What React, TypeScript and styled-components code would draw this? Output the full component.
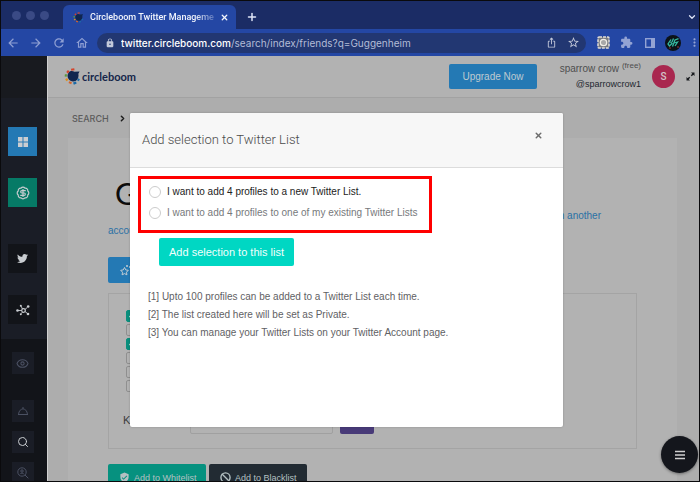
import React from "react";
import styled, { createGlobalStyle, css } from "styled-components";
import {
  MdArrowBack,
  MdArrowForward,
  MdRefresh,
  MdOutlineHome,
  MdLock,
  MdIosShare,
  MdStarOutline,
  MdExtension,
  MdMoreVert,
  MdVerifiedUser,
} from "react-icons/md";
import { FaTwitter, FaCheck } from "react-icons/fa";
import { BadgeDollarSign, Ban, ChevronDown, ChevronRight, Eye, Plus, Search, X } from "lucide-react";

const sans = `"Liberation Sans", Arial, sans-serif`;
const ui = `Roboto, "Liberation Sans", sans-serif`;

const GlobalStyle = createGlobalStyle`
  *, *::before, *::after { box-sizing: border-box; }
  body { margin: 0; background: #000; font-family: ${sans}; }
  button, input { font-family: inherit; margin: 0; }
  button { border: 0; padding: 0; cursor: pointer; background: none; color: inherit; }
  h1, h2, p, ul { margin: 0; padding: 0; }
  svg { display: block; flex: none; }
`;

const Window = styled.div`
  position: relative;
  display: flex;
  flex-direction: column;
  height: 100vh;
  overflow: hidden;
  border: 1px solid #0a0a0c;
`;

/* Browser chrome */

const TabStrip = styled.div`
  display: flex;
  align-items: center;
  flex: none;
  height: 28px;
  padding: 0 2px 0 11px;
  background: #1b2c65;
  color: #dfe5f7;
`;

const Lights = styled.div`
  display: flex;
  gap: 5px;
  width: 51px;
`;

const Light = styled.span`
  width: 9px;
  height: 9px;
  border-radius: 50%;
  background: #3a4a85;
`;

const Tab = styled.div`
  display: flex;
  align-items: center;
  align-self: flex-end;
  width: 173px;
  height: 24px;
  padding: 0 7px 0 10px;
  gap: 6px;
  border-radius: 6px 6px 0 0;
  background: #2447a4;
  font: 500 9px/14px ${ui};
  color: #f2f5fd;
`;

const TabTitle = styled.span`
  flex: 1;
  white-space: nowrap;
  mask-image: linear-gradient(to right, #000 84%, rgba(0, 0, 0, 0.25));
`;

const ChromeButton = styled.button<{ $tone?: string }>`
  display: flex;
  align-items: center;
  justify-content: center;
  flex: none;
  color: ${(p) => p.$tone ?? "#b8c4e8"};
`;

const NewTab = styled(ChromeButton)`
  margin: 4px auto 0 10px;
`;

const TabList = styled(ChromeButton)`
  margin-top: 4px;
`;

const Toolbar = styled.div`
  display: flex;
  align-items: center;
  flex: none;
  height: 27px;
  padding-left: 5px;
  background: #2447a4;
`;

const NavButtons = styled.div`
  display: flex;
  gap: 9px;
  width: 91px;
`;

const Address = styled.div`
  display: flex;
  align-items: center;
  flex: 1;
  height: 20px;
  padding: 0 6px 0 8px;
  gap: 10px;
  border-radius: 10px;
  background: #223772;
  color: #c3c9da;
`;

const Location = styled.div`
  display: flex;
  align-items: center;
  flex: 1;
  gap: 6px;
`;

const Url = styled.span`
  flex: 1;
  overflow: hidden;
  white-space: nowrap;
  font: 400 10px/16px Inter, sans-serif;
  color: #b3bcd6;
`;

const Host = styled.span`
  font-weight: 500;
  color: #ffffff;
`;

const Extensions = styled.div`
  display: grid;
  grid-template-columns: repeat(4, 13px) 10px;
  align-items: center;
  justify-items: center;
  gap: 10px;
  padding-left: 11px;
`;

/* Application shell */

const Shell = styled.div`
  display: flex;
  flex: 1;
  min-height: 0;
  overflow: hidden;
`;

const Sidebar = styled.nav`
  display: flex;
  flex-direction: column;
  flex: none;
  width: 47px;
  border-right: 1px solid #d0d0d0;
  background: #1a1d26;
`;

const SidebarCap = styled.div`
  flex: none;
  height: 42px;
  background: #181a1f;
`;

const PrimaryLinks = styled.div`
  display: flex;
  flex-direction: column;
  align-items: center;
  flex: none;
  gap: 22px;
  padding: 29px 3px 15px 0;
`;

const SecondaryLinks = styled.div`
  display: flex;
  flex-direction: column;
  align-items: center;
  flex: 1;
  gap: 9px;
  padding: 13px 3px 0 0;
  background: #121419;
`;

const Tile = styled.a<{ $bg: string; $small?: boolean; $spaced?: number; $tone?: string }>`
  display: flex;
  align-items: center;
  justify-content: center;
  flex: none;
  width: ${(p) => (p.$small ? 22 : 29)}px;
  height: ${(p) => (p.$small ? 22 : 29)}px;
  margin-top: ${(p) => p.$spaced ?? 0}px;
  background: ${(p) => p.$bg};
  color: ${(p) => p.$tone ?? "#c9cdd1"};
`;

const Main = styled.div`
  flex: 1;
  min-width: 0;
  background: #adadad;
`;

const Header = styled.header`
  display: flex;
  align-items: center;
  height: 42px;
  padding: 0 4px 0 16px;
  border-bottom: 1px solid #a2a2a2;
  background: #b2b2b2;
`;

const Brand = styled.a`
  display: flex;
  align-items: center;
  gap: 1px;
  margin-right: auto;
  font: 700 11px/16px Lato, sans-serif;
  color: #15264a;
  text-decoration: none;
`;

const Upgrade = styled.button`
  height: 25px;
  width: 88px;
  border-radius: 2px;
  background: #2479b4;
  color: #bfc9d0;
  font-size: 10px;
`;

const Account = styled.div`
  width: 104px;
  margin-right: 11px;
  text-align: right;
  font-size: 10px;
  line-height: 14px;
  color: #4e4e4e;
`;

const Plan = styled.sup`
  font-size: 8px;
  line-height: 8px;
`;

const Handle = styled.div`
  font-size: 9px;
  line-height: 14px;
  color: #222730;
`;

const Avatar = styled.div`
  width: 23px;
  height: 23px;
  margin-right: 11px;
  border-radius: 50%;
  background: #a9274f;
  color: #d3c4c9;
  font: 500 10px/23px ${ui};
  text-align: center;
`;

const Crumbs = styled.div`
  display: flex;
  align-items: center;
  gap: 9px;
  height: 40px;
  padding: 1px 0 0 24px;
  font: 500 9px/14px Inter, sans-serif;
  color: #5c5c5c;
`;

const Card = styled.section`
  margin: 0 22px 0 20px;
  padding: 41px 40px 0;
  height: 400px;
  background: #b2b2b2;
`;

const Heading = styled.h1`
  padding-left: 7px;
  font: 400 30px/29px Lato, sans-serif;
  color: #0c0c0c;
`;

const Hint = styled.a`
  display: block;
  padding-right: 36px;
  font-size: 10px;
  line-height: 15px;
  color: #2a71a5;
  text-decoration: none;
`;

const HintEnd = styled.span`
  display: block;
  text-align: right;
`;

const Favourite = styled.button`
  display: flex;
  align-items: center;
  width: 90px;
  height: 26px;
  margin-top: 19px;
  padding-left: 11px;
  border-radius: 2px;
  background: #2479b4;
  color: #c3ccd3;
`;

const Filters = styled.div`
  margin-top: 10px;
  padding: 16px 17px 14px;
  border: 1px solid #a4a4a4;
`;

const FilterList = styled.div`
  display: flex;
  flex-direction: column;
  gap: 2px;
`;

const tick = css`
  border-color: #0a8f7d;
  background: #0a8f7d;
`;

const FilterBox = styled.input`
  appearance: none;
  display: block;
  width: 12px;
  height: 12px;
  border: 1px solid #8f8f8f;
  border-radius: 2px;
  &:checked {
    ${tick}
  }
`;

const FilterLabel = styled.label`
  display: grid;
  width: 12px;
  color: #c6dad6;
  > * {
    grid-area: 1 / 1;
    place-self: center;
  }
`;

const KeywordRow = styled.div`
  display: flex;
  align-items: center;
  margin: 13px 0 0 -3px;
  font-size: 11px;
  color: #3c3c3c;
`;

const KeywordLabel = styled.label`
  width: 67px;
`;

const KeywordInput = styled.input`
  width: 143px;
  height: 28px;
  border: 1px solid #a0a0a0;
  border-radius: 2px;
  background: #b2b2b2;
`;

const KeywordButton = styled.button`
  width: 34px;
  height: 29px;
  margin-left: 7px;
  border-radius: 2px;
  background: #483a78;
`;

const Actions = styled.div`
  display: flex;
  gap: 3px;
  margin-top: 15px;
`;

const Action = styled.button<{ $bg: string }>`
  display: flex;
  align-items: center;
  gap: 4px;
  width: 98px;
  height: 27px;
  padding-left: 11px;
  border-radius: 2px;
  background: ${(p) => p.$bg};
  color: #b4c0c2;
  font-size: 9px;
  white-space: nowrap;
`;

/* Dialog */

const Overlay = styled.div`
  position: absolute;
  inset: 0;
  padding: 112px 136px 0 129px;
`;

const Dialog = styled.div`
  overflow: hidden;
  border-radius: 2px;
  background: #ffffff;
  color: #5f6164;
  box-shadow: 0 0 2px rgba(0, 0, 0, 0.25);
`;

const DialogHead = styled.div`
  display: flex;
  justify-content: space-between;
  height: 55px;
  padding: 18px 20px 0 12px;
  border-bottom: 1px solid #dcdcdc;
  background: #f7f7f7;
`;

const DialogTitle = styled.h2`
  font: 300 13px/18px ${ui};
  color: #4a4a4a;
`;

const Close = styled.button`
  height: 8px;
  color: #6c6c6c;
`;

const DialogBody = styled.div`
  padding: 8px 8px 85px;
`;

const Choices = styled.div`
  display: flex;
  flex-direction: column;
  gap: 7px;
  max-width: 294px;
  height: 57px;
  padding: 6px 8px;
  border: 3px solid #ff0000;
`;

const Choice = styled.label<{ $strong?: boolean }>`
  display: flex;
  align-items: center;
  gap: 6px;
  font-size: 10px;
  line-height: 14px;
  white-space: nowrap;
  color: ${(p) => (p.$strong ? "#222222" : "#77797c")};
`;

const Radio = styled.input`
  appearance: none;
  width: 12px;
  height: 12px;
  border: 1px solid #cccccc;
  border-radius: 50%;
  background: #ffffff;
  &:checked {
    border: 4px solid #00d6c1;
  }
`;

const Submit = styled.button`
  display: block;
  width: 135px;
  height: 28px;
  margin: 5px 0 0 21px;
  border-radius: 2px;
  background: #00d7c3;
  color: #f2fffd;
  font-size: 11px;
`;

const Notes = styled.div`
  margin: 22px 0 0 10px;
  font-size: 10px;
  line-height: 18px;
`;

const MenuFab = styled.button`
  position: absolute;
  right: 1px;
  bottom: 8px;
  display: flex;
  align-items: center;
  justify-content: center;
  width: 37px;
  height: 37px;
  border-radius: 50%;
  background: #14161c;
  color: #cfcfcf;
  box-shadow: 0 1px 3px rgba(0, 0, 0, 0.4);
`;

function BrandMark({ size }: { size: number }) {
  return (
    <svg width={size} height={size} viewBox="0 0 18 18" fill="none" aria-hidden="true">
      <path d="M5 4.800C7 2.500 9.500 3.300 11 4l5.500-.3L15.200 6c.6 3-.2 6-2.500 7.400-2.800 1.700-6.400.7-7.900-1.700C3.200 9.500 3.500 6.500 5 4.800z" fill="#10264f" />
      <path d="M7.500 1.900 11 1.400" stroke="#d4442b" strokeWidth="2.200" />
      <path d="M3.200 5 5 2.900" stroke="#d4442b" strokeWidth="2.200" />
      <path d="M1.800 9.200 2 6.600" stroke="#5c9a3b" strokeWidth="2.200" />
      <path d="M3.600 13.400 2.300 11.200" stroke="#e08e1d" strokeWidth="2.400" />
      <path d="M8 16.200 5.200 15" stroke="#d4632b" strokeWidth="2.200" />
      <path d="M13 15.300 10 16.500" stroke="#1c6ba8" strokeWidth="2.400" />
      <path d="M15.900 11.300 14.700 13.500" stroke="#1c6ba8" strokeWidth="2.200" />
    </svg>
  );
}

function GridGlyph() {
  return (
    <svg width="10" height="10" viewBox="0 0 10 10" fill="currentColor" aria-hidden="true">
      <path d="M0 0h4.500v4.500H0zM5.500 0H10v4.500H5.500zM0 5.500h4.500V10H0zM5.500 5.500H10V10H5.500z" />
    </svg>
  );
}

function NetworkGlyph() {
  return (
    <svg width="14" height="12" viewBox="0 0 14 12" fill="none" stroke="currentColor" aria-hidden="true">
      <circle cx="7.500" cy="6.500" r="1.800" strokeWidth="1.200" />
      <path d="M5.500 6.500H2M6.500 5 5 2M9 5.500l2.500-2.300M9 7.500l2.500 2M6.500 8l-1 1.500" strokeWidth=".9" />
      <g fill="currentColor" stroke="none">
        <circle cx="1.500" cy="6.500" r="1.300" />
        <circle cx="4.800" cy="1.700" r="1" />
        <circle cx="12.200" cy="2.500" r="1.300" />
        <circle cx="12" cy="10" r="1.300" />
        <circle cx="4.800" cy="10.200" r="1" />
      </g>
    </svg>
  );
}

function BellGlyph() {
  return (
    <svg width="12" height="10" viewBox="0 0 12 10" fill="none" stroke="currentColor" aria-hidden="true">
      <path d="M1 8.500h10M1.500 8.500C2 4.500 4 3 6 3s4 1.500 4.500 5.500M6 3V1" />
    </svg>
  );
}

function ZoomUserGlyph() {
  return (
    <svg width="12" height="12" viewBox="0 0 12 12" fill="none" stroke="currentColor" aria-hidden="true">
      <circle cx="5" cy="5" r="4.200" />
      <path d="m8 8 3.300 3.300M3.200 7c.5-1.200 3-1.200 3.600 0" />
      <circle cx="5" cy="4" r="1.200" />
    </svg>
  );
}

function StarsGlyph() {
  return (
    <svg width="14" height="12" viewBox="0 0 14 12" fill="none" stroke="currentColor" aria-hidden="true">
      <path d="m5.500 3.500 1.200 2.400 2.600.4-1.800 1.900.4 2.600-2.400-1.200-2.400 1.200.4-2.600-1.800-1.900 2.600-.4z" />
      <path d="M8 1v2M7 2h2M11 2v2M10 3h2" />
    </svg>
  );
}

function SnipGlyph() {
  return (
    <svg width="13" height="13" viewBox="0 0 13 13" fill="none" aria-hidden="true">
      <rect x="1" y="1" width="11" height="11" rx="1" fill="#777a80" stroke="#e4e0d8" strokeWidth="1.500" strokeDasharray="3 1" />
      <circle cx="6.500" cy="6.500" r="3.200" fill="#a8a8a8" stroke="#f0ede6" strokeWidth="1.300" />
    </svg>
  );
}

function PanelGlyph() {
  return (
    <svg width="10" height="10" viewBox="0 0 10 10" aria-hidden="true">
      <rect x=".7" y=".7" width="8.600" height="8.600" fill="none" stroke="#93a3d4" strokeWidth="1.400" />
      <rect x="6" y="1" width="3.500" height="8" fill="#93a3d4" />
    </svg>
  );
}

function ProfileGlyph() {
  return (
    <svg width="16" height="16" viewBox="0 0 16 16" fill="none" aria-hidden="true">
      <circle cx="8" cy="8" r="8" fill="#0b1218" />
      <path d="M6 4.500 3 9l1.500 2L7 8.500 5.500 7M7.500 11.500 10 5l3.500-1.300M9 8l3.500-1L10 11M8.500 3.500 7 7" stroke="#35b9a0" strokeWidth="1.300" />
      <circle cx="5" cy="13" r=".7" fill="#d33f3f" />
      <circle cx="13" cy="12" r=".7" fill="#d33f3f" />
    </svg>
  );
}

function ExpandGlyph() {
  return (
    <svg width="9" height="9" viewBox="0 0 9 9" fill="currentColor" stroke="currentColor" aria-hidden="true">
      <path d="M5 .5h3.500V4zM.5 5v3.500H4z" stroke="none" />
      <path d="M7.500 1.500 5.300 3.700M1.500 7.500l2.200-2.200" strokeWidth="1.400" />
    </svg>
  );
}

function MenuGlyph() {
  return (
    <svg width="10" height="10" viewBox="0 0 10 10" stroke="currentColor" strokeWidth="1.400" aria-hidden="true">
      <path d="M0 1.500h10M0 5h10M0 8.500h10" />
    </svg>
  );
}

const filters = [true, false, true, false, false, false];

const notes = [
  "[1] Upto 100 profiles can be added to a Twitter List each time.",
  "[2] The list created here will be set as Private.",
  "[3] You can manage your Twitter Lists on your Twitter Account page.",
];

function Browser() {
  return (
    <>
      <TabStrip>
        <Lights>
          <Light />
          <Light />
          <Light />
        </Lights>
        <Tab>
          <BrandMark size={11} />
          <TabTitle>Circleboom Twitter Manageme</TabTitle>
          <ChromeButton $tone="#f2f5fd" aria-label="Close tab">
            <X size={9} strokeWidth={3.5} />
          </ChromeButton>
        </Tab>
        <NewTab $tone="#dfe5f7" aria-label="New tab">
          <Plus size={12} strokeWidth={3} />
        </NewTab>
        <TabList $tone="#dfe5f7" aria-label="Tab list">
          <ChevronDown size={10} strokeWidth={3} />
        </TabList>
      </TabStrip>
      <Toolbar>
        <NavButtons>
          <ChromeButton $tone="#8e9fd3" aria-label="Back"><MdArrowBack size={14} /></ChromeButton>
          <ChromeButton $tone="#8e9fd3" aria-label="Forward"><MdArrowForward size={14} /></ChromeButton>
          <ChromeButton $tone="#8e9fd3" aria-label="Reload"><MdRefresh size={14} /></ChromeButton>
          <ChromeButton $tone="#8e9fd3" aria-label="Home"><MdOutlineHome size={14} /></ChromeButton>
        </NavButtons>
        <Address>
          <Location>
            <MdLock size={10} />
            <Url>
              <Host>twitter.circleboom.com</Host>/search/index/friends?q=Guggenheim
            </Url>
          </Location>
          <ChromeButton $tone="#c3c9da" aria-label="Share"><MdIosShare size={11} /></ChromeButton>
          <ChromeButton $tone="#c3c9da" aria-label="Bookmark"><MdStarOutline size={13} /></ChromeButton>
        </Address>
        <Extensions>
          <SnipGlyph />
          <ChromeButton $tone="#93a3d4" aria-label="Extensions"><MdExtension size={13} /></ChromeButton>
          <PanelGlyph />
          <ProfileGlyph />
          <ChromeButton $tone="#93a3d4" aria-label="Browser menu"><MdMoreVert size={13} /></ChromeButton>
        </Extensions>
      </Toolbar>
    </>
  );
}

function SideNav() {
  return (
    <Sidebar>
      <SidebarCap />
      <PrimaryLinks>
        <Tile href="#dashboard" aria-label="Dashboard" $bg="#2479b4"><GridGlyph /></Tile>
        <Tile href="#pricing" aria-label="Pricing" $bg="#067a66"><BadgeDollarSign size={14} /></Tile>
        <Tile href="#twitter" aria-label="Twitter" $bg="#121419" $spaced={15}><FaTwitter size={11} /></Tile>
        <Tile href="#network" aria-label="Network" $bg="#121419"><NetworkGlyph /></Tile>
      </PrimaryLinks>
      <SecondaryLinks>
        <Tile href="#watch" aria-label="Watch" $bg="#1a1d26" $tone="#4b5163" $small><Eye size={13} /></Tile>
        <Tile href="#alerts" aria-label="Alerts" $bg="#1a1d26" $tone="#4b5163" $small $spaced={17}><BellGlyph /></Tile>
        <Tile href="#search" aria-label="Search" $bg="#1a1d26" $small><Search size={12} /></Tile>
        <Tile href="#people" aria-label="People search" $bg="#1a1d26" $tone="#4b5163" $small><ZoomUserGlyph /></Tile>
      </SecondaryLinks>
    </Sidebar>
  );
}

function SearchPage() {
  return (
    <Main>
      <Header>
        <Brand href="#home">
          <BrandMark size={17} />
          circleboom
        </Brand>
        <Upgrade>Upgrade Now</Upgrade>
        <Account>
          sparrow crow <Plan>(free)</Plan>
          <Handle>@sparrowcrow1</Handle>
        </Account>
        <Avatar>S</Avatar>
        <ChromeButton $tone="#16181c" aria-label="Full screen"><ExpandGlyph /></ChromeButton>
      </Header>
      <Crumbs>
        SEARCH <ChevronRight size={9} strokeWidth={4} color="#1c1c1c" />
      </Crumbs>
      <Card>
        <Heading>G</Heading>
        <Hint href="#account">
          <HintEnd>from another</HintEnd>
          account
        </Hint>
        <Favourite aria-label="Save search"><StarsGlyph /></Favourite>
        <Filters>
          <FilterList>
            {filters.map((on, i) => (
              <FilterLabel key={i}>
                <FilterBox type="checkbox" defaultChecked={on} aria-label={`Filter ${i + 1}`} />
                {on && <FaCheck size={7} />}
              </FilterLabel>
            ))}
          </FilterList>
          <KeywordRow>
            <KeywordLabel htmlFor="keyword">K</KeywordLabel>
            <KeywordInput id="keyword" />
            <KeywordButton aria-label="Filter results" />
          </KeywordRow>
        </Filters>
        <Actions>
          <Action $bg="#06917f"><MdVerifiedUser size={11} />Add to Whitelist</Action>
          <Action $bg="#222b33"><Ban size={11} strokeWidth={3} />Add to Blacklist</Action>
        </Actions>
      </Card>
    </Main>
  );
}

function ListDialog() {
  return (
    <Overlay>
      <Dialog role="dialog" aria-labelledby="dialog-title">
        <DialogHead>
          <DialogTitle id="dialog-title">Add selection to Twitter List</DialogTitle>
          <Close aria-label="Close"><X size={9} strokeWidth={4} /></Close>
        </DialogHead>
        <DialogBody>
          <Choices role="radiogroup">
            <Choice $strong>
              <Radio type="radio" name="target" />
              I want to add 4 profiles to a new Twitter List.
            </Choice>
            <Choice>
              <Radio type="radio" name="target" />
              I want to add 4 profiles to one of my existing Twitter Lists
            </Choice>
          </Choices>
          <Submit>Add selection to this list</Submit>
          <Notes>
            {notes.map((note) => (
              <p key={note}>{note}</p>
            ))}
          </Notes>
        </DialogBody>
      </Dialog>
    </Overlay>
  );
}

export default function App() {
  return (
    <>
      <GlobalStyle />
      <Window>
        <Browser />
        <Shell>
          <SideNav />
          <SearchPage />
        </Shell>
        <ListDialog />
        <MenuFab aria-label="Menu"><MenuGlyph /></MenuFab>
      </Window>
    </>
  );
}
